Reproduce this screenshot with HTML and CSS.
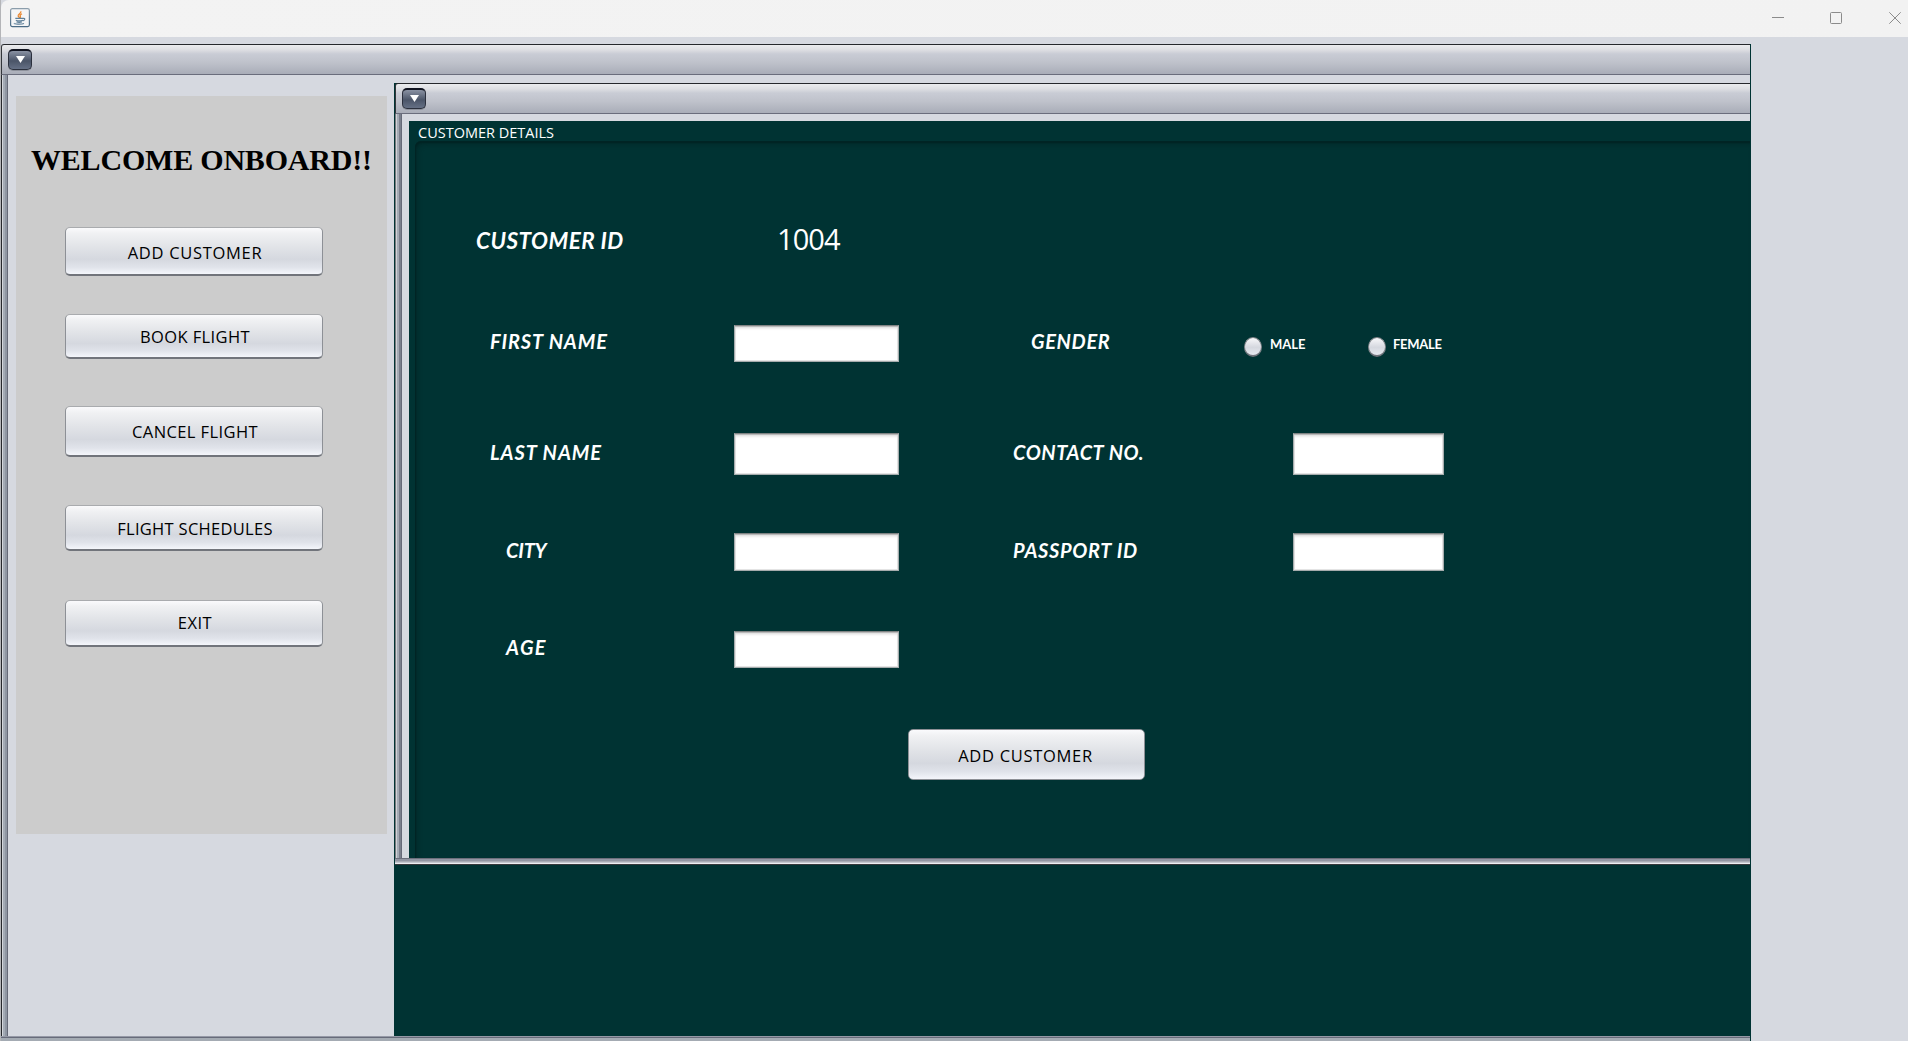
FILE: index.html
```html
<!DOCTYPE html>
<html lang="en">
<head>
<meta charset="utf-8">
<title>Customer Details</title>
<link rel="stylesheet" href="styles.css">
</head>
<body>
<div class="window">
  <header class="titlebar">
    <svg class="java" width="20" height="20" viewBox="0 0 20 20">
      <defs><linearGradient id="jb" x1="0" y1="0" x2="0" y2="1"><stop offset="0" stop-color="#8b9dab"/><stop offset="1" stop-color="#4a6b85"/></linearGradient></defs>
      <rect x=".6" y=".6" width="18.8" height="18" rx="1.8" fill="#f4f5f6" stroke="url(#jb)" stroke-width="1.2"/>
      <path d="M10.8 3.2c1 2-3.200 2.800-2.600 4.800.3.900 1.100 1.300 1.500 2.200M12 5.800c-1.500.8-2.300 1.500-1.700 2.500.4.700.3 1.100-.3 1.700" fill="none" stroke="#e9872f" stroke-width="1.300"/>
      <path d="M5.300 10.400h8M5.800 12.300c2 .6 5 .6 7 0M6.500 13.900c1.600.5 3.800.5 5.400 0M13 10.400c2.600-.5 2.200 2-.3 2.400M4.500 15.200c-1.300.9 6.500 1.500 9.500.3" fill="none" stroke="#5f8099" stroke-width="1.200"/>
    </svg>
    <svg class="controls" width="120" height="14" viewBox="0 0 120 14" fill="none" stroke="#8b8b8b">
      <path d="M0 6.500h12"/>
      <rect x="58.500" y="1.500" width="11" height="11" rx="1"/>
      <path d="M117.300 1.300l11.400 11.400M128.700 1.300L117.300 12.700"/>
    </svg>
  </header>

  <main class="desktop">
    <section class="frame outer">
      <div class="frame-title">
        <button class="menu"><svg width="9" height="7" viewBox="0 0 9 7"><path d="M0 0h9L4.500 7z" fill="#fff"/></svg></button>
      </div>
      <div class="frame-body">
        <nav class="sidebar">
          <h1>WELCOME ONBOARD!!</h1>
          <button class="btn b1"><span>ADD CUSTOMER</span></button>
          <button class="btn b2"><span>BOOK FLIGHT</span></button>
          <button class="btn b3"><span>CANCEL FLIGHT</span></button>
          <button class="btn b4"><span>FLIGHT SCHEDULES</span></button>
          <button class="btn b5"><span>EXIT</span></button>
        </nav>
        <div class="pane">
          <section class="frame inner">
            <div class="frame-title">
              <button class="menu"><svg width="9" height="7" viewBox="0 0 9 7"><path d="M0 0h9L4.500 7z" fill="#fff"/></svg></button>
            </div>
            <div class="details">
              <h2>CUSTOMER DETAILS</h2>
              <form class="form">
                <label class="id-label"><span>CUSTOMER ID</span></label>
                <output>1004</output>
                <label class="c1 r2 in1 t-first">FIRST NAME</label><input class="c2 r2">
                <label class="c3 r2 in3 t-gender">GENDER</label>
                <div class="radios">
                  <label class="radio"><i></i><span class="t-male">MALE</span></label>
                  <label class="radio"><i></i><span class="t-female">FEMALE</span></label>
                </div>
                <label class="c1 r3 in1 t-last">LAST NAME</label><input class="c2 r3">
                <label class="c3 r3 t-contact">CONTACT NO.</label><input class="c4 r3">
                <label class="c1 r4 in2 t-city">CITY</label><input class="c2 r4">
                <label class="c3 r4 t-pass">PASSPORT ID</label><input class="c4 r4">
                <label class="c1 r5 in2 t-age">AGE</label><input class="c2 r5">
                <button type="button" class="btn submit"><span>ADD CUSTOMER</span></button>
              </form>
            </div>
          </section>
        </div>
      </div>
    </section>
  </main>
</div>
</body>
</html>
```
FILE: styles.css
```css
* { box-sizing: border-box; }
body { margin: 0; overflow: hidden; background: #d6d9e0; font-family: "Open Sans", "Noto Sans", sans-serif; }
button { font: inherit; padding: 0; }
.window { width: 1908px; height: 1041px; display: flex; flex-direction: column; border-left: 1px solid #b4b5b8; }
.titlebar { flex: none; height: 37px; background: linear-gradient(90deg, #f3f3f3, #f2f2f2); border-top-left-radius: 8px; display: flex; justify-content: space-between; align-items: flex-start; padding: 8px 16px 0 9px; }
.controls { margin-top: 3px; overflow: visible; }
.desktop { flex: 1; padding-top: 7px; min-height: 0; }

.frame { display: flex; flex-direction: column; }
.frame-title { flex: none; height: 31px; border-top: 1px solid #26282c; border-bottom: 1px solid #6a6d7c; border-left: 1px solid #33363b; border-top-left-radius: 3px;
  background: linear-gradient(#ebecee 0, #dddee2 5px, #c9ccd5 9px, #bfc2cb 60%, #a9adb8 100%); padding: 4px 0 0 6px; }
.menu { display: flex; align-items: center; justify-content: center; width: 24px; height: 21px; border: 1px solid #2b303d; border-top: 2px solid #10131f; border-radius: 5px;
  background: linear-gradient(#8a92a3, #4b5568 55%, #657085); box-shadow: 0 1px 0 #8d919b; padding-bottom: 1px; }

.outer { width: 1750px; height: 997px; border-right: 1px solid #003333; }
.frame-body { flex: 1; min-height: 0; display: flex; border-style: solid; border-width: 0 0 5px 7px; border-color: transparent; padding-top: 8px;
  background:
    linear-gradient(#d6d9e0, #d6d9e0) padding-box,
    linear-gradient(0deg, #a4abb3 0 3px, #676b7a 3px 4px, #9599a6 4px 5px, transparent 5px) border-box,
    linear-gradient(90deg, #26282c 0 1px, #d4d7dc 1px 2px, #a4abb5 2px 4px, #8f96a2 4px 6px, #666a78 6px 7px, transparent 7px) border-box; }
.sidebar { flex: none; width: 371px; height: 738px; margin: 13px 7px 0 8px; background: #cccccc; display: flex; flex-direction: column; align-items: flex-start; padding-left: 49px; }
h1 { margin: 47px 0 0 -34px; height: 84px; font: bold 30px/34px "Liberation Serif", serif; color: #000; white-space: nowrap; letter-spacing: -0.200px; }
.btn { width: 258px; border: 1px solid #8d9096; border-top-color: #a9abae; border-bottom: 2px solid #71747b; border-radius: 5px; color: #000; font-size: 16.500px; letter-spacing: 0.300px;
  background: linear-gradient(#fafafc 0, #f0f1f3 12%, #e2e4e8 40%, #d5d8df 68%, #e0e3ea 85%, #f4f6fb 100%); display: flex; align-items: center; justify-content: center; white-space: nowrap; }
.sidebar .btn { padding-left: 2px; }
.b1 { height: 49px; padding-top: 2px; letter-spacing: 0.700px; } .b2 { height: 45px; margin-top: 38px; letter-spacing: 0.400px; }
.b3 { height: 51px; margin-top: 47px; padding-top: 1px; letter-spacing: 0.400px; } .b4 { height: 46px; margin-top: 48px; padding-top: 1px; } .b5 { height: 47px; margin-top: 49px; padding-bottom: 1px; letter-spacing: 0.500px; }

.pane { flex: 1; min-width: 0; background: #003333; }
.inner { height: 782px; border-left: 1px solid #003333; }
.details { flex: 1; min-height: 0; border-style: solid; border-width: 0 0 7px 7px; border-color: transparent; padding: 7px 0 0 7px;
  background:
    linear-gradient(#003333, #003333) content-box,
    linear-gradient(#d6d9e0, #d6d9e0) padding-box,
    linear-gradient(0deg, #36383c 0 1px, #eceef2 1px 2px, #c5c8d0 2px 3px, #a9adb6 3px 4px, #9296a3 4px 6px, #6c6f7c 6px 7px, transparent 7px) border-box,
    linear-gradient(90deg, #77797d 0 1px, #d0d3d8 1px 2px, #a4a9b3 2px 4px, #7a7f8c 4px 6px, #666a78 6px 7px) border-box; }
h2 { margin: 0; height: 20px; padding-left: 9px; font-size: 14.500px; line-height: 23px; font-weight: 400; color: #fff; white-space: nowrap; }
.form { height: 717px; margin-left: 6px; border-top-left-radius: 6px; box-shadow: inset 1px 2px 1px #002424, inset 3px 4px 4px #002b2b;
  display: grid; grid-template-columns: 257px 279px 280px 151px; grid-template-rows: 104px 37px 71px 42px 58px 38px 60px 37px 61px 51px;
  padding: 80px 0 0 62px; align-content: start; }
.form > label { font: italic bold 20px/32px Lato, sans-serif; color: #fff; white-space: nowrap; }
.form > .id-label { grid-area: 1 / 1; font-size: 22.500px; line-height: 39px; letter-spacing: 0.450px; margin-left: -1px; }
output { grid-area: 1 / 2; color: #fff; font-size: 29px; line-height: 36px; padding-left: 43px; letter-spacing: -0.900px; }
.c1 { grid-column: 1; } .c2 { grid-column: 2; } .c3 { grid-column: 3; } .c4 { grid-column: 4; }
.r2 { grid-row: 2; } .r3 { grid-row: 4; } .r4 { grid-row: 6; } .r5 { grid-row: 8; }
.in1 { padding-left: 13px; } .in2 { padding-left: 29px; } .in3 { padding-left: 18px; }
label.r3 { padding-top: 3px; } label.r4 { padding-top: 1px; }
.t-first { letter-spacing: 0.850px; } .t-last { letter-spacing: 0.950px; } .t-gender { letter-spacing: 0.650px; }
.t-contact { letter-spacing: 0.550px; } .t-pass { letter-spacing: 0.700px; } .t-city { letter-spacing: -0.200px; } .t-age { letter-spacing: 1.400px; }
input { width: 165px; height: 100%; padding: 0; border: 1px solid #a6acad; border-top-color: #808484; border-radius: 0; background: #fff; box-shadow: inset 0 1px 0 #b9b9b9, inset 0 3px 3px -1px #d5d5d5, inset 0 0 0 1px #e4e4e4; }
input.c4 { width: 151px; }
.radios { grid-area: 2 / 4; display: flex; margin-left: -49px; padding-top: 12px; }
.radio { display: flex; width: 124px; height: 20px; flex: none; color: #fff; font: bold 13px/14px Lato, sans-serif; }
.radio i { width: 18px; height: 20px; margin-right: 8px; border-radius: 50%; border: 1px solid #84878c; border-bottom: 2px solid #70737b; background: linear-gradient(#f8f8fa, #d5d8df 55%, #e6e9f0); }
.t-female { letter-spacing: -0.300px; margin-left: -1px; }
.submit { grid-area: 10 / 1 / 11 / 4; width: 237px; height: 51px; margin-left: 431px; border-width: 1px; border-color: #8d9096; letter-spacing: 0.700px; padding: 1px 2px 0 0; }
```
